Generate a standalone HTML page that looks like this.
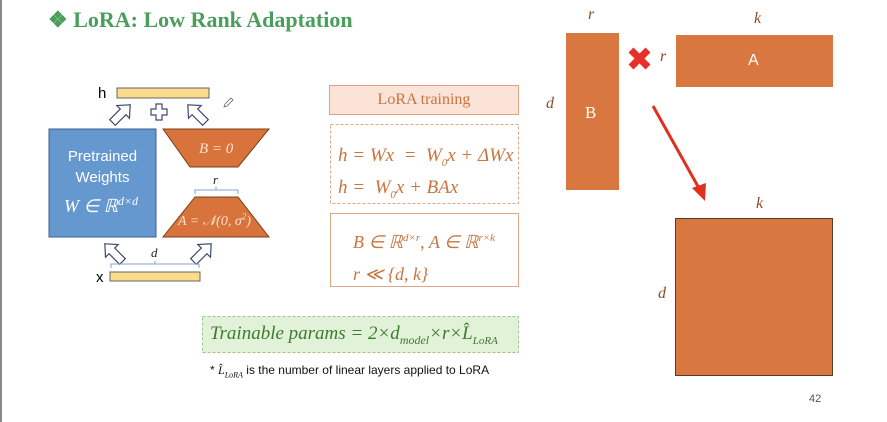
<!DOCTYPE html>
<html><head><meta charset="utf-8"><style>
body{margin:0;width:887px;height:422px;background:#fff;overflow:hidden;position:relative;font-family:"Liberation Sans",sans-serif}
.abs{position:absolute}
.m{font-family:"Liberation Serif",serif;font-style:italic;color:#c8753f}
sub,sup{line-height:0}
</style></head><body>
<div class="abs" style="left:0;top:0;width:2px;height:422px;background:#888"></div>
<div class="abs" style="left:48px;top:7px;font-family:'Liberation Serif',serif;font-weight:bold;font-size:22px;color:#4a9e5c">❖ LoRA: Low Rank Adaptation</div>
<svg class="abs" style="left:0;top:0" width="887" height="422">
<defs><polygon id="ha" points="0,-13 9,-3 4,-3 4,12 -4,12 -4,-3 -9,-3" fill="#fff" stroke="#3a4a70" stroke-width="1.2"/></defs>
<rect x="117" y="88" width="92" height="10" fill="#fbdc8c" stroke="#666" stroke-width="1"/>
<rect x="110" y="272" width="90" height="9" fill="#fbdc8c" stroke="#666" stroke-width="1"/>
<rect x="49" y="129" width="107" height="108" fill="#6698d0" stroke="#3d5f90" stroke-width="1"/>
<polygon points="163,129 269,129 238,167 190,167" fill="#d8733b" stroke="#7a3f1a" stroke-width="1"/>
<polygon points="195,197 238,197 269,237 163,237" fill="#d8733b" stroke="#7a3f1a" stroke-width="1"/>
<use href="#ha" transform="translate(121,114) rotate(45)"/>
<use href="#ha" transform="translate(197,114) rotate(-45)"/>
<use href="#ha" transform="translate(114,253) rotate(-45)"/>
<use href="#ha" transform="translate(202,253) rotate(45)"/>
<polygon points="156,104 162,104 162,109 167,109 167,115 162,115 162,120 156,120 156,115 151,115 151,109 156,109" fill="#fff" stroke="#3a4a70" stroke-width="1.2"/>
<path d="M195,194 v-4 h43 v4 M216,190 v-3" fill="none" stroke="#8aa0c8" stroke-width="1"/>
<path d="M111,268 v-4 h88 v4 M155,264 v-3" fill="none" stroke="#8aa0c8" stroke-width="1"/>
<path d="M225,104 l6,-6 2,2 -6,6 -3,1z" fill="none" stroke="#666" stroke-width="0.8"/>
<rect x="329.5" y="85.5" width="189" height="29" fill="#fbe3d8" stroke="#e0a585"/>
<rect x="330.5" y="124.5" width="188" height="79" fill="none" stroke="#e0a585" stroke-dasharray="3,2"/>
<rect x="330.5" y="213.5" width="188" height="73" fill="none" stroke="#e0a585"/>
<rect x="202.5" y="316.5" width="316" height="36" fill="#e2f2d8" stroke="#9cc490" stroke-dasharray="3,2"/>
<rect x="566" y="33" width="53" height="157" fill="#d8773f"/>
<rect x="676" y="35" width="157" height="52" fill="#d8773f"/>
<rect x="675.5" y="218.5" width="157" height="157" fill="#d8773f" stroke="#5a3a28"/>
<path d="M631,50 l17,17 M648,50 l-17,17" stroke="#e8302a" stroke-width="7"/>
<path d="M653,106 L700,190" stroke="#e03020" stroke-width="3"/>
<polygon points="692,188 705,201 706,183" fill="#e03020"/>
</svg>
<div class="abs" style="left:98px;top:85px;font-size:15px">h</div>
<div class="abs" style="left:96px;top:269px;font-size:15px">x</div>
<div class="abs" style="left:49px;top:146px;width:107px;text-align:center;color:#fff;font-size:15px;line-height:21px">Pretrained<br>Weights</div>
<div class="abs m" style="left:64px;top:196px;color:#fff;font-size:18px">W ∈ ℝ<sup style="font-size:12px">d×d</sup></div>
<div class="abs m" style="left:199px;top:141px;color:#fbe0cc;font-size:15px">B = 0</div>
<div class="abs m" style="left:178px;top:214px;color:#fbe0cc;font-size:14px">A = 𝒩(0, σ<sup style="font-size:9px">2</sup>)</div>
<div class="abs m" style="left:213px;top:172px;color:#222;font-size:13px">r</div>
<div class="abs m" style="left:151px;top:245px;color:#222;font-size:13px">d</div>
<div class="abs" style="left:329px;top:91px;width:190px;text-align:center;font-family:'Liberation Serif',serif;font-size:16px;color:#c8753f">LoRA training</div>
<div class="abs m" style="left:338px;top:140px;font-size:19px;line-height:32px">h = Wx &nbsp;= &nbsp;W<sub style="font-size:11px">0</sub>x + ΔWx<br>h = &nbsp;W<sub style="font-size:11px">0</sub>x + BAx</div>
<div class="abs m" style="left:353px;top:226px;font-size:18px;line-height:32px">B ∈ ℝ<sup style="font-size:11px">d×r</sup>, A ∈ ℝ<sup style="font-size:11px">r×k</sup><br>r ≪ {d, k}</div>
<div class="abs m" style="left:210px;top:323px;font-size:19px;color:#3d7a2e">Trainable params = 2×d<sub style="font-size:12px">model</sub>×r×L̂<sub style="font-size:11px">LoRA</sub></div>
<div class="abs" style="left:210px;top:363px;font-size:12px;color:#111">* <i style="font-family:'Liberation Serif',serif">L̂<sub style="font-size:8px">LoRA</sub></i> is the number of linear layers applied to LoRA</div>
<div class="abs m" style="left:588px;top:6px;font-size:16px;color:#8a4a2a">r</div>
<div class="abs m" style="left:754px;top:10px;font-size:16px;color:#8a4a2a">k</div>
<div class="abs m" style="left:660px;top:48px;font-size:16px;color:#8a4a2a">r</div>
<div class="abs m" style="left:546px;top:95px;font-size:16px;color:#8a4a2a">d</div>
<div class="abs" style="left:585px;top:103px;font-size:17px;color:#fff;font-family:'Liberation Serif',serif">B</div>
<div class="abs" style="left:748px;top:52px;font-size:16px;color:#fff">A</div>
<div class="abs m" style="left:756px;top:195px;font-size:16px;color:#8a4a2a">k</div>
<div class="abs m" style="left:658px;top:285px;font-size:16px;color:#8a4a2a">d</div>
<div class="abs" style="left:809px;top:393px;font-size:11px;color:#555">42</div>
</body></html>
